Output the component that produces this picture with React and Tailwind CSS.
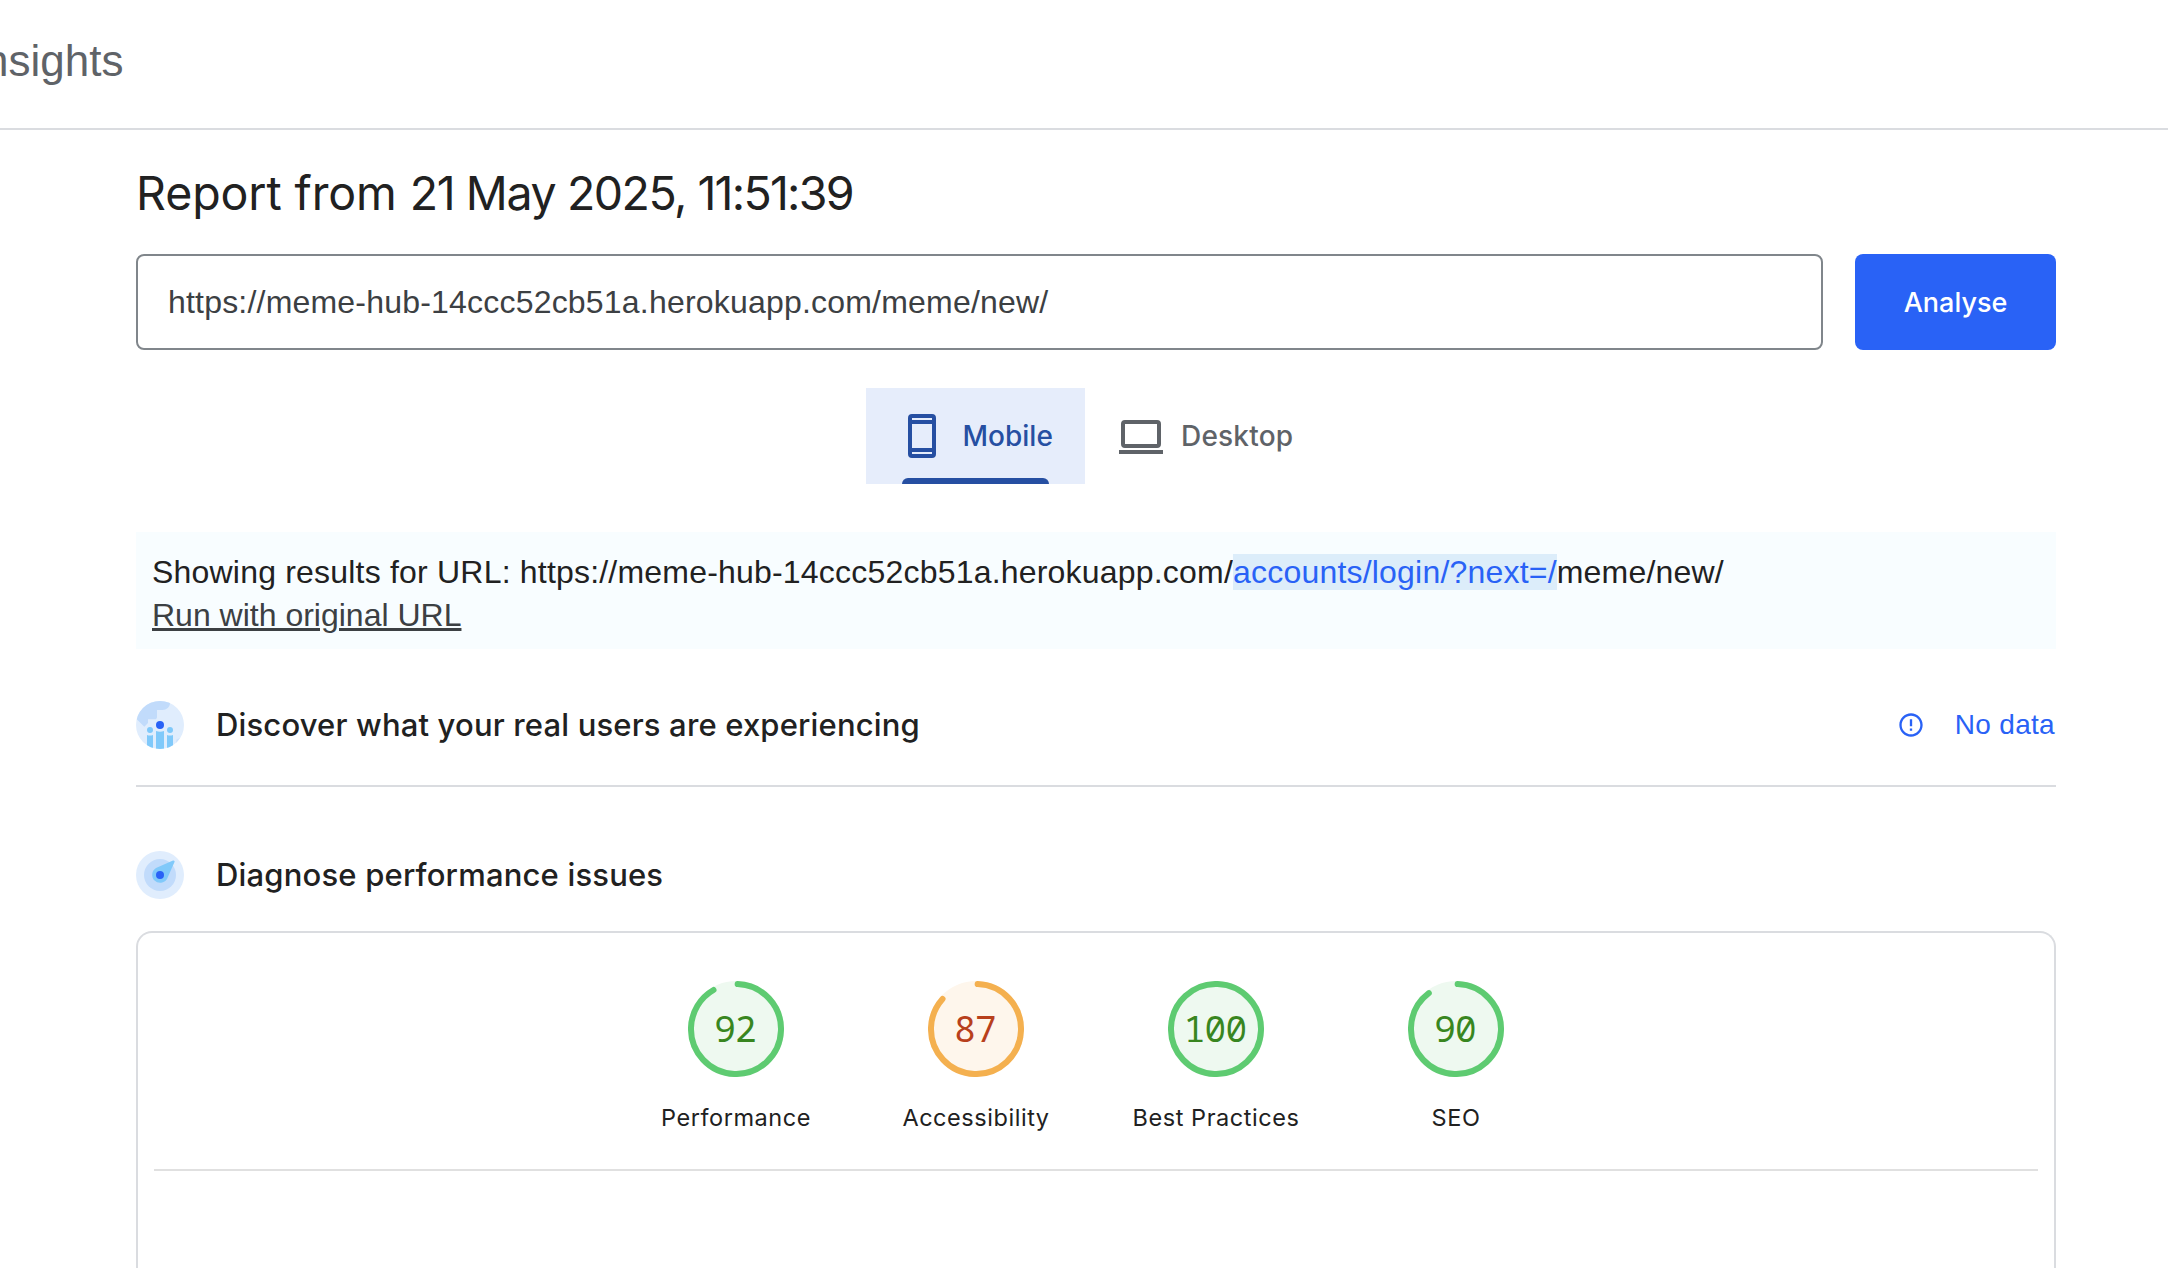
import React from 'react';

const ARIAL = "font-['Liberation_Sans',Arial,sans-serif]";
const INTER = "font-['Inter',sans-serif]";

const RING = 2 * Math.PI * 45;

const GAUGES = [
  { score: 92, label: 'Performance', tone: 'pass' },
  { score: 87, label: 'Accessibility', tone: 'average' },
  { score: 100, label: 'Best Practices', tone: 'pass' },
  { score: 90, label: 'SEO', tone: 'pass' },
];

const TONES = {
  pass: { ring: 'stroke-[#5ecb71]', fill: 'fill-[#eef9f0]', text: 'text-[#388620]' },
  average: { ring: 'stroke-[#f4b04f]', fill: 'fill-[#fef6ec]', text: 'text-[#b8401c]' },
};

function Gauge({ score, label, tone }) {
  const t = TONES[tone];
  const length = score === 100 ? RING : (RING * score) / 100 - 3;
  return (
    <div className="flex w-60 flex-col items-center">
      <div className="grid size-24 place-items-center">
        <svg viewBox="0 0 96 96" className="col-start-1 row-start-1 size-24">
          <circle cx="48" cy="48" r="48" className={t.fill} />
          <circle
            cx="48"
            cy="48"
            r="45"
            fill="none"
            strokeWidth="6"
            strokeLinecap="round"
            strokeDasharray={`${length} ${RING}`}
            transform="rotate(-87.9 48 48)"
            className={t.ring}
          />
        </svg>
        <span
          className={`col-start-1 row-start-1 mr-0.5 font-['Noto_Sans_Mono','DejaVu_Sans_Mono',monospace] text-[36px] leading-[48px] tracking-[-0.8px] ${t.text}`}
        >
          {score}
        </span>
      </div>
      <span className={`mt-[25px] ${INTER} text-[23.5px] leading-8 tracking-[0.55px] text-[#212121]`}>{label}</span>
    </div>
  );
}

function PhoneIcon() {
  return (
    <svg viewBox="0 0 28 44" className="h-11 w-7 fill-current">
      <path
        fillRule="evenodd"
        d="M4 0h20a4 4 0 0 1 4 4v36a4 4 0 0 1-4 4H4a4 4 0 0 1-4-4V4a4 4 0 0 1 4-4zM4 4v2h20V4zM4 10v24h20V10zM4 38v2h20v-2z"
      />
    </svg>
  );
}

function LaptopIcon() {
  return (
    <svg viewBox="0 0 44 34" className="mt-0.5 h-[34px] w-11 fill-current">
      <path fillRule="evenodd" d="M6 0h32a4 4 0 0 1 4 4v20a4 4 0 0 1-4 4H6a4 4 0 0 1-4-4V4a4 4 0 0 1 4-4zM6 4v20h32V4z" />
      <path d="M0 30h44v4H0z" />
    </svg>
  );
}

function UsersIcon() {
  return (
    <svg viewBox="0 0 48 48" className="size-12">
      <clipPath id="globe">
        <circle cx="24" cy="24" r="24" />
      </clipPath>
      <g clipPath="url(#globe)">
        <path fill="#e0edfd" d="M0 0h48v48H0z" />
        <path fill="#c1dbfb" d="M0 0h34v2c0 4-3.500 7-7.500 7H21v7c0 1.500-1 2.300-2.300 2.300H12V22l-3.700 3.700L0 17.500z" />
        <path fill="#c1dbfb" d="M48 36l-5 1.500-2.500 1-.5 4 8 3z" opacity="0.6" />
        <path fill="#80c9fa" d="M11 34q3 1.200 6 0v14h-6zM31 34q3 1.200 6 0v14h-6zM20 30q4 1.600 8 0v18h-8z" />
        <circle cx="14" cy="29" r="3" fill="#80c9fa" />
        <circle cx="34" cy="29" r="3" fill="#80c9fa" />
        <circle cx="24" cy="24" r="4" fill="#2962f6" />
      </g>
    </svg>
  );
}

function CompassIcon() {
  return (
    <svg viewBox="0 0 48 48" className="size-12">
      <circle cx="24" cy="24" r="24" fill="#e0edfd" />
      <circle cx="24" cy="24" r="16" fill="#c1dbfb" />
      <path
        fill="#80c9fa"
        d="M37 9.600c1.100-.5 2 .4 1.500 1.500L31 28a8 8 0 1 1-11-11z"
      />
      <circle cx="24" cy="24" r="4" fill="#2962f6" />
    </svg>
  );
}

function NoDataIcon() {
  return (
    <svg viewBox="0 0 24 24" className="size-7 fill-current">
      <path d="M11 15h2v2h-2zm0-8h2v6h-2zm.99-5C6.470 2 2 6.480 2 12s4.470 10 9.990 10C17.520 22 22 17.520 22 12S17.520 2 11.990 2zM12 20c-4.420 0-8-3.580-8-8s3.580-8 8-8 8 3.580 8 8-3.580 8-8 8z" />
    </svg>
  );
}

export default function App() {
  return (
    <div className={`flex h-[1268px] w-full flex-col overflow-hidden bg-white text-[#212121] ${ARIAL}`}>
      <header className="flex h-[130px] shrink-0 items-start border-b-2 border-[#dadce0] pt-9">
        <span className="-ml-[16px] text-[44px] leading-[50px] text-[#5f6368]">nsights</span>
      </header>

      <main className="ml-[136px] flex min-h-0 w-[1920px] flex-1 flex-col">
        <h1 className={`mt-[31px] ${INTER} text-[46.5px] leading-[64px] whitespace-nowrap`}>
          <span className="tracking-[-0.1px]">Report from </span>
          <span className="tracking-[-1.4px]">21 May </span>
          <span className="tracking-[-1.5px]">2025, </span>
          <span className="tracking-[-1.75px]">11:51:39</span>
        </h1>

        <div className="mt-[29px] flex h-24 shrink-0 gap-8">
          <div className="flex w-[1687px] items-center rounded-lg border-2 border-[#80868b] px-[30px] text-[32px] tracking-[0.2px] text-[#3c4043]">
            https://meme-hub-14ccc52cb51a.herokuapp.com/meme/new/
          </div>
          <button className={`flex-1 rounded-lg bg-[#2962f6] pt-0.5 ${INTER} text-[27px] font-medium text-white`}>Analyse</button>
        </div>

        <div className="mt-[38px] flex h-24 shrink-0 pl-[730px]">
          <div className="flex w-[219px] flex-col bg-[#e6edfb] text-[#264fa2]">
            <div className="flex h-[90px] items-center gap-[26.5px] pt-1.5 pl-[42px]">
              <PhoneIcon />
              <span className={`${INTER} text-[28px] leading-9 font-medium`}>Mobile</span>
            </div>
            <div className="ml-9 h-1.5 w-[147px] rounded-t-md bg-[#264fa2]" />
          </div>
          <div className="flex h-[90px] items-center gap-[18px] pt-1.5 pl-[34px] text-[#5f6368]">
            <LaptopIcon />
            <span className={`${INTER} text-[28px] leading-9 font-medium tracking-[0.2px]`}>Desktop</span>
          </div>
        </div>

        <div className="mt-12 h-[117px] shrink-0 bg-[#f8fdff] pt-[19px] pl-4 text-[32px] leading-[43px]">
          <p className="tracking-[0.2px]">
            Showing results for URL: https://meme-hub-14ccc52cb51a.herokuapp.com/
            <span className="bg-[#dcedfa] text-[#2962f6]">accounts/login/?next=/</span>meme/new/
          </p>
          <a className="text-[#3c4043] underline decoration-[3px] underline-offset-2">Run with original URL</a>
        </div>

        <section className="flex h-[138px] shrink-0 items-start border-b-2 border-[#dadce0] pt-[52px]">
          <UsersIcon />
          <h2 className={`ml-8 ${INTER} text-[31px] leading-[48px] font-medium tracking-[0.16px]`}>
            Discover what your real users are experiencing
          </h2>
          <div className="ml-auto flex h-12 items-center gap-[30px] pr-px text-[28px] tracking-[0.3px] text-[#2962f6]">
            <NoDataIcon />
            <span>No data</span>
          </div>
        </section>

        <section className="flex min-h-0 flex-1 flex-col pt-16">
          <div className="flex items-center">
            <CompassIcon />
            <h2 className={`ml-8 ${INTER} text-[31px] leading-[48px] font-medium tracking-[0.18px]`}>
              Diagnose performance issues
            </h2>
          </div>
          <div className="mt-8 flex-1 rounded-t-2xl border-2 border-b-0 border-[#dadce0] px-4">
            <div className="flex h-[238px] justify-center border-b-2 border-[#e0e0e0] pt-12">
              {GAUGES.map((g) => (
                <Gauge key={g.label} {...g} />
              ))}
            </div>
          </div>
        </section>
      </main>
    </div>
  );
}
